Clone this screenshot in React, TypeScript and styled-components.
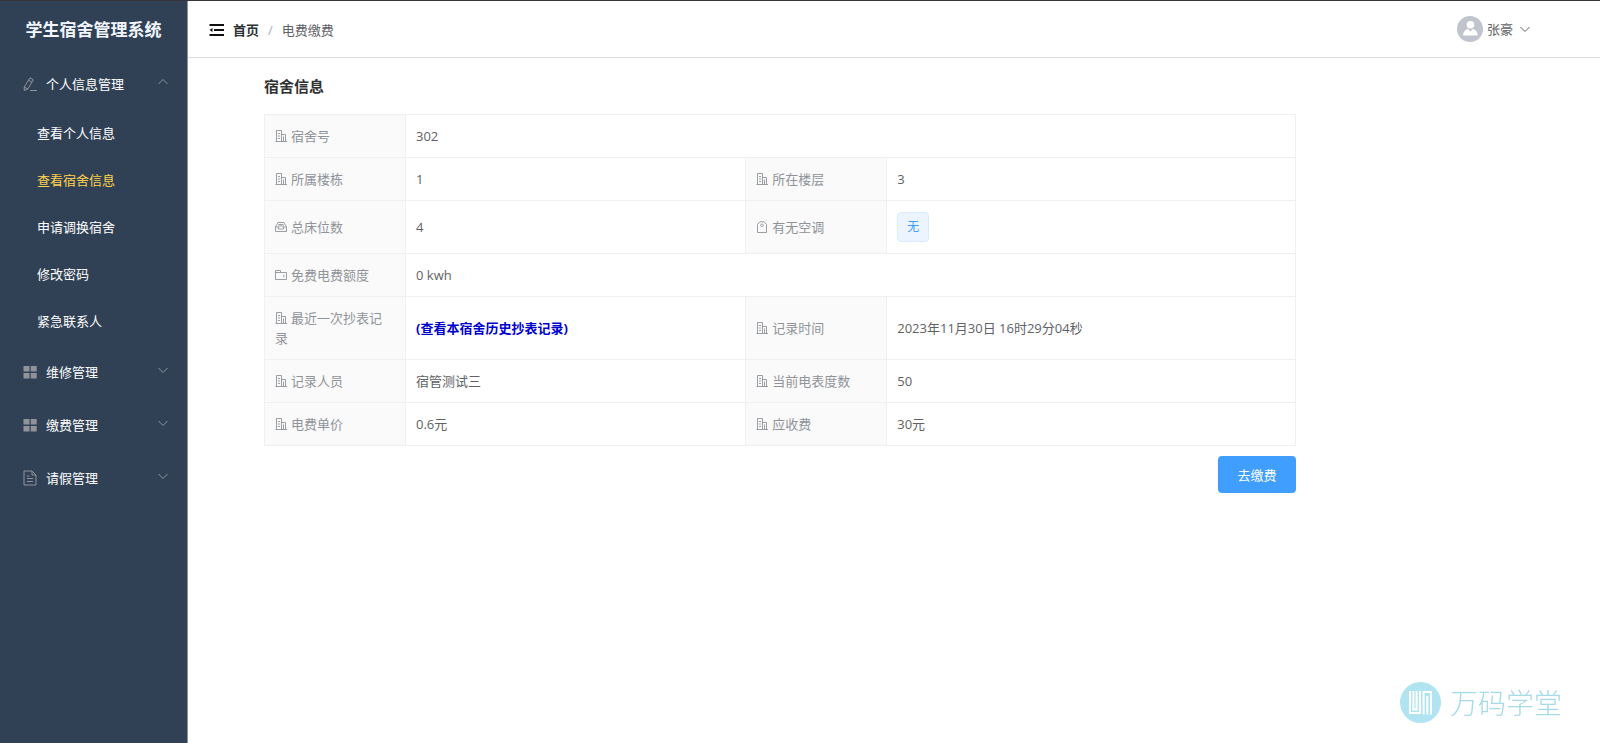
import React from 'react';
import styled, { createGlobalStyle, css } from 'styled-components';

const GlobalStyle = createGlobalStyle`
  *, *::before, *::after { box-sizing: border-box; }
  body {
    margin: 0;
    background: #fff;
    color: #606266;
    font-family: "Open Sans", "Noto Sans CJK SC", sans-serif;
    font-size: 13px;
    line-height: 20px;
  }
`;

const Page = styled.div`
  display: flex;
  min-height: 100vh;
  border-top: 1px solid #36363a;
`;

const Sidebar = styled.aside`
  flex: 0 0 188px;
  background: #304156;
  border-right: 1px solid #8a94a0;
`;

const Brand = styled.h1`
  margin: 0;
  height: 56px;
  line-height: 58px;
  text-align: center;
  font-size: 17px;
  font-weight: 700;
  color: #f2f6fc;
`;

const MenuList = styled.ul`
  margin: 0;
  padding: 0;
  list-style: none;
`;

const GroupButton = styled.button`
  display: flex;
  align-items: center;
  gap: 9px;
  width: 100%;
  height: 53px;
  padding: 0 19px 0 23px;
  border: 0;
  background: none;
  color: #fff;
  font: inherit;
  cursor: pointer;
`;

const GroupName = styled.span`
  flex: 1;
  text-align: left;
`;

const MenuLink = styled.a<{ $active?: boolean }>`
  display: block;
  height: 47px;
  padding-left: 37px;
  line-height: 47px;
  text-decoration: none;
  color: ${(p) => (p.$active ? '#ffd04b' : '#fff')};
`;

const Main = styled.div`
  flex: 1;
  min-width: 0;
`;

const Header = styled.header`
  display: flex;
  align-items: center;
  justify-content: space-between;
  height: 57px;
  padding: 0 70px 0 21px;
  border-bottom: 1px solid #dcdcdc;
`;

const HeaderLeft = styled.div`
  display: flex;
  align-items: center;
  gap: 9px;
  padding-top: 2px;
`;

const IconButton = styled.button`
  display: flex;
  padding: 0;
  border: 0;
  background: none;
  color: #111;
  cursor: pointer;
`;

const Breadcrumb = styled.nav`
  display: flex;
  gap: 9px;
`;

const HomeLink = styled.a`
  color: #303133;
  font-weight: 700;
  text-decoration: none;
`;

const Slash = styled.span`
  color: #a8abb2;
`;

const UserMenu = styled.button`
  display: flex;
  align-items: center;
  gap: 4px;
  padding: 0;
  border: 0;
  background: none;
  color: #606266;
  font: inherit;
  cursor: pointer;
`;

const UserName = styled.span`
  padding-right: 3px;
`;

const Content = styled.main`
  padding: 18px 304px 0 76px;
`;

const SectionTitle = styled.h2`
  margin: 0 0 18px;
  font-size: 15px;
  line-height: 20px;
  font-weight: 700;
  color: #303133;
`;

const InfoTable = styled.table`
  width: 100%;
  table-layout: fixed;
  border-collapse: collapse;
`;

const LabelCol = styled.col`
  width: 141px;
`;

const ValueCol = styled.col`
  width: 33%;
`;

const cell = css`
  padding: 11px 10px;
  border: 1px solid #eff0f3;
  text-align: left;
  font-weight: 400;
  vertical-align: middle;
`;

const LabelCell = styled.th`
  ${cell}
  padding-right: 16px;
  background: #fafafa;
  color: #909399;

  svg {
    margin-right: 4px;
    vertical-align: -1px;
  }
`;

const ValueCell = styled.td`
  ${cell}
`;

const HistoryLink = styled.a`
  color: #0000cd;
  font-weight: 700;
  text-decoration: none;
`;

const Tag = styled.span`
  display: block;
  width: max-content;
  height: 30px;
  padding: 0 9px;
  border: 1px solid #d9ecff;
  border-radius: 4px;
  background: #ecf5ff;
  color: #409eff;
  font-size: 12px;
  line-height: 28px;
`;

const Actions = styled.div`
  display: flex;
  justify-content: flex-end;
  padding-top: 10px;
`;

const PrimaryButton = styled.button`
  min-width: 78px;
  height: 37px;
  padding: 0 19px;
  border: 0;
  border-radius: 4px;
  background: #409eff;
  color: #fff;
  font: inherit;
  cursor: pointer;
`;

const Watermark = styled.div`
  position: fixed;
  right: 38px;
  bottom: 20px;
  display: flex;
  align-items: center;
  gap: 9px;
  color: #a6dbe8;
  font-family: "Noto Sans CJK SC", sans-serif;
  font-size: 28px;
  font-weight: 300;
  line-height: 41px;
  pointer-events: none;
`;

type ChevronProps = { up?: boolean; color?: string };

const Chevron = ({ up, color = '#909399' }: ChevronProps) => (
  <svg width="10" height="10" viewBox="0 0 10 10" fill="none" stroke={color} aria-hidden="true">
    <path d={up ? 'M.5 7 5 2.5 9.5 7' : 'M.5 3 5 7.5 9.5 3'} />
  </svg>
);

const GroupChevron = styled.span`
  display: flex;
  padding-bottom: 4px;
`;

const EditIcon = () => (
  <svg width="14" height="14" viewBox="0 0 14 14" fill="none" stroke="#909399" aria-hidden="true">
    <path d="M7 .8 10.300 2.700 5 11.800 1.200 13.500 1.300 10ZM5.600 3.200l3.300 1.900M1.300 10l3.500 2M7 13.500h7" />
  </svg>
);

const GridIcon = () => (
  <svg width="14" height="14" viewBox="0 0 14 14" fill="#909399" aria-hidden="true">
    <path d="M.5 1h6v5.500h-6zM7.700 1h6v5.500h-6zM.5 8h6v5.500h-6zM7.700 8h6v5.500h-6z" />
  </svg>
);

const DocumentIcon = () => (
  <svg width="14" height="16" viewBox="0 0 14 16" fill="none" stroke="#909399" aria-hidden="true">
    <path d="M1 1h8l4 4v10H1zM9 1v4h4M4 6h2.500M4 8.500h6M4 11.500h6" />
  </svg>
);

const FoldIcon = () => (
  <svg width="15" height="12" viewBox="0 0 15 12" fill="currentColor" aria-hidden="true">
    <path d="M.5 0H15v2H.5zM5 5h10v2H5zM.5 10H15v2H.5zM.5 6l3-2v4z" />
  </svg>
);

const AvatarIcon = () => (
  <svg width="26" height="26" viewBox="0 0 26 26" aria-hidden="true">
    <circle cx="13" cy="13" r="13" fill="#c0c4cc" />
    <circle cx="13.500" cy="8.800" r="3.800" fill="#fff" />
    <path d="M6 19.500c.2-3.500 2-6 5-6.800l2.400 3.100 2.400-3.100c3 .8 4.800 3.300 5 6.800z" fill="#fff" />
  </svg>
);

const iconPaths = {
  building: 'M1.500.5h5v11M1.500.5v11M6.500 4.500h4v7M.5 11.500h11.500M3 3.500h2M3 6h2M3 8.500h2M8.500 6.500v5',
  bed: 'M3 1.500h6l2.500 4.500v4.500H.5V6zM.5 6h3v2h5V6h3M3.500 3.500h5M3 5h6',
  tag: 'M1.500 3.500 4 .8h4l2.500 2.700v8h-9zM6 3a1.300 1.300 0 1 0 .01 0',
  wallet: 'M.5 10.500v-9h5v2h6v7zM.5 3.500h5M8.800 5.800v2.400',
};

type IconName = keyof typeof iconPaths;

const FieldIcon = ({ name }: { name: IconName }) => (
  <svg width="12" height="12" viewBox="0 0 12 12" fill="none" stroke="#909399" strokeWidth=".9" aria-hidden="true">
    <path d={iconPaths[name]} />
  </svg>
);

const BrandMark = () => (
  <svg width="41" height="41" viewBox="0 0 41 41" aria-hidden="true">
    <circle cx="20.500" cy="20.500" r="20.500" fill="#b0e4f0" />
    <path
      d="M10 9v22h10V9M13.400 9v18.600h3.200V9M23.600 32.500V10H31v22.500M27.300 32.500V14"
      fill="none"
      stroke="#fff"
      strokeWidth="2"
    />
  </svg>
);

const groups = [
  {
    name: '个人信息管理',
    icon: <EditIcon />,
    items: ['查看个人信息', '查看宿舍信息', '申请调换宿舍', '修改密码', '紧急联系人'],
  },
  { name: '维修管理', icon: <GridIcon />, items: [] },
  { name: '缴费管理', icon: <GridIcon />, items: [] },
  { name: '请假管理', icon: <DocumentIcon />, items: [] },
];

type Field = { label: string; icon: IconName; value: React.ReactNode };

const rows: Field[][] = [
  [{ label: '宿舍号', icon: 'building', value: '302' }],
  [
    { label: '所属楼栋', icon: 'building', value: '1' },
    { label: '所在楼层', icon: 'building', value: '3' },
  ],
  [
    { label: '总床位数', icon: 'bed', value: '4' },
    { label: '有无空调', icon: 'tag', value: <Tag>无</Tag> },
  ],
  [{ label: '免费电费额度', icon: 'wallet', value: '0 kwh' }],
  [
    {
      label: '最近一次抄表记录',
      icon: 'building',
      value: <HistoryLink href="#history">(查看本宿舍历史抄表记录)</HistoryLink>,
    },
    { label: '记录时间', icon: 'building', value: '2023年11月30日 16时29分04秒' },
  ],
  [
    { label: '记录人员', icon: 'building', value: '宿管测试三' },
    { label: '当前电表度数', icon: 'building', value: '50' },
  ],
  [
    { label: '电费单价', icon: 'building', value: '0.6元' },
    { label: '应收费', icon: 'building', value: '30元' },
  ],
];

export default function App() {
  return (
    <>
      <GlobalStyle />
      <Page>
        <Sidebar>
          <Brand>学生宿舍管理系统</Brand>
          <MenuList>
            {groups.map((group) => {
              const open = group.items.length > 0;
              return (
                <li key={group.name}>
                  <GroupButton type="button" aria-expanded={open}>
                    {group.icon}
                    <GroupName>{group.name}</GroupName>
                    <GroupChevron>
                      <Chevron up={open} />
                    </GroupChevron>
                  </GroupButton>
                  {open && (
                    <MenuList>
                      {group.items.map((item) => (
                        <li key={item}>
                          <MenuLink href="#" $active={item === '查看宿舍信息'}>
                            {item}
                          </MenuLink>
                        </li>
                      ))}
                    </MenuList>
                  )}
                </li>
              );
            })}
          </MenuList>
        </Sidebar>
        <Main>
          <Header>
            <HeaderLeft>
              <IconButton type="button" aria-label="收起菜单">
                <FoldIcon />
              </IconButton>
              <Breadcrumb>
                <HomeLink href="#">首页</HomeLink>
                <Slash>/</Slash>
                <span>电费缴费</span>
              </Breadcrumb>
            </HeaderLeft>
            <UserMenu type="button">
              <AvatarIcon />
              <UserName>张豪</UserName>
              <Chevron color="#606266" />
            </UserMenu>
          </Header>
          <Content>
            <SectionTitle>宿舍信息</SectionTitle>
            <InfoTable>
              <colgroup>
                <LabelCol />
                <ValueCol />
                <LabelCol />
                <col />
              </colgroup>
              <tbody>
                {rows.map((fields) => (
                  <tr key={fields[0].label}>
                    {fields.map((field) => (
                      <React.Fragment key={field.label}>
                        <LabelCell scope="row">
                          <FieldIcon name={field.icon} />
                          {field.label}
                        </LabelCell>
                        <ValueCell colSpan={fields.length === 1 ? 3 : 1}>{field.value}</ValueCell>
                      </React.Fragment>
                    ))}
                  </tr>
                ))}
              </tbody>
            </InfoTable>
            <Actions>
              <PrimaryButton type="button">去缴费</PrimaryButton>
            </Actions>
          </Content>
        </Main>
      </Page>
      <Watermark>
        <BrandMark />
        万码学堂
      </Watermark>
    </>
  );
}
